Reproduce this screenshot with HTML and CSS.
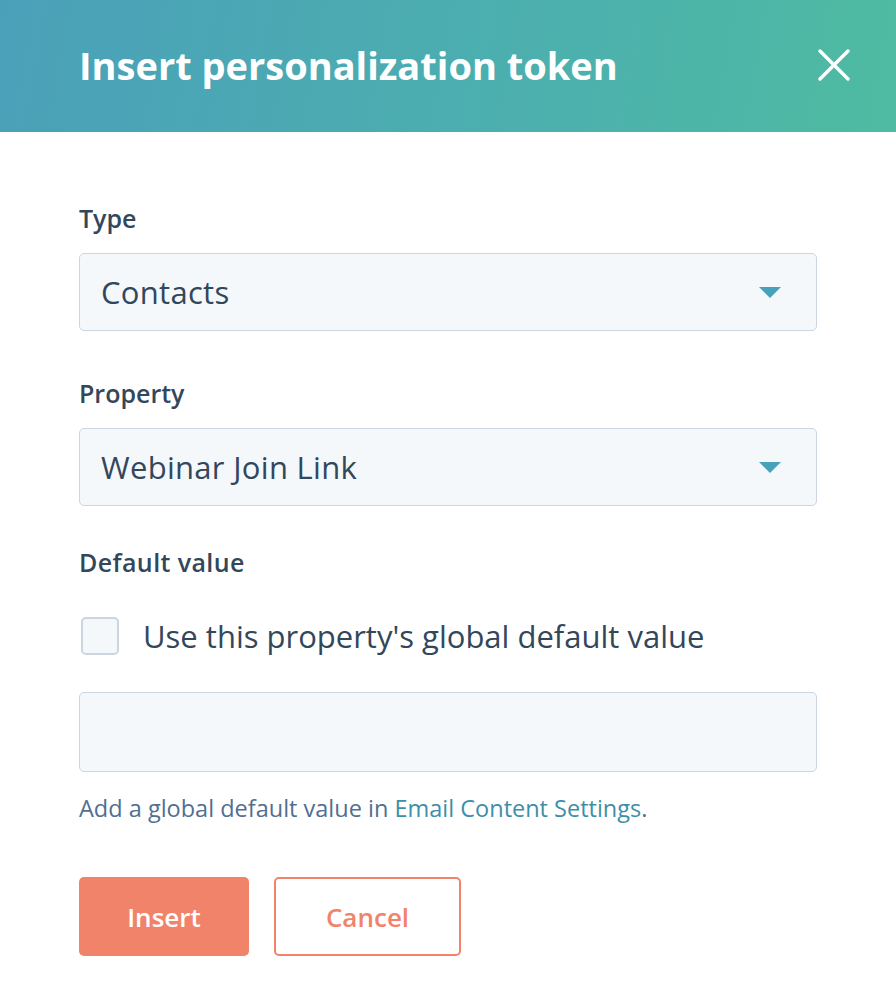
FILE: index.html
```html
<!DOCTYPE html>
<html lang="en">
<head>
<meta charset="utf-8">
<title>Insert personalization token</title>
<link rel="stylesheet" href="styles.css">
</head>
<body>
<div class="dialog">
  <header class="header">
    <h1 class="title">Insert personalization token</h1>
    <button class="close" aria-label="Close">
      <svg width="32" height="32" viewBox="0 0 32 32"><path d="M2 2 L30 30 M30 2 L2 30" stroke="#fff" stroke-width="3.4" stroke-linecap="round" fill="none"/></svg>
    </button>
  </header>
  <main class="body">
    <div class="field">
      <label class="label">Type</label>
      <div class="select"><span>Contacts</span><span class="caret"></span></div>
    </div>
    <div class="field">
      <label class="label">Property</label>
      <div class="select"><span>Webinar Join Link</span><span class="caret"></span></div>
    </div>
    <div class="field default">
      <label class="label">Default value</label>
      <div class="check-row"><span class="checkbox"></span><span class="check-label">Use this property's global default value</span></div>
      <div class="input"></div>
      <p class="help">Add a global default value in <a class="link">Email Content Settings</a>.</p>
    </div>
    <div class="actions">
      <button class="btn primary">Insert</button>
      <button class="btn secondary">Cancel</button>
    </div>
  </main>
</div>
</body>
</html>
```
FILE: styles.css
```css
* { box-sizing: border-box; }
html, body { margin: 0; padding: 0; background: #fff; }
body { font-family: "Open Sans", Lato, sans-serif; color: #33475b; width: 896px; height: 1004px; overflow: hidden; }
.header {
  height: 132px;
  background: linear-gradient(100deg, #4aa0b9 0%, #4cb0ae 60%, #4fbba1 100%);
  display: flex; align-items: center; justify-content: space-between;
  padding: 0 46px 0 79px;
}
.title { margin: 0; color: #fff; font-size: 38px; font-weight: 700; letter-spacing: 0; padding-bottom: 2px; }
.close { background: none; border: 0; padding: 0; width: 32px; height: 32px; display: flex; margin-top: -2px; }
.body { padding: 70px 79px 0 79px; }
.field { margin-bottom: 46px; }
.label { display: block; font-size: 25px; font-weight: 600; line-height: 32px; margin-bottom: 19px; color: #33475b; }
.select {
  height: 78px; background: #f5f8fa; border: 1px solid #cbd6e2; border-radius: 5px;
  display: flex; align-items: center; justify-content: space-between;
  padding: 0 35px 0 21px; font-size: 31px; letter-spacing: 0.3px; color: #33475b;
}
.caret { width: 0; height: 0; border-left: 11px solid transparent; border-right: 11px solid transparent; border-top: 11px solid #46a2bb; }
.default { margin-bottom: 0; }
.default .label { margin-bottom: 0; margin-top: -6px; letter-spacing: 0.4px; }
.check-row { display: flex; align-items: center; height: 40px; margin-top: 38px; margin-bottom: 36px; }
.checkbox { width: 38px; height: 38px; border: 2px solid #cbd6e2; border-radius: 5px; background: #f5f8fa; margin-left: 2px; margin-right: 24px; }
.check-label { font-size: 31px; color: #33475b; }
.input { height: 80px; background: #f5f8fa; border: 1px solid #cbd6e2; border-radius: 5px; }
.help { margin: 21px 0 0 0; font-size: 23.5px; color: #516f90; line-height: 30px; }
.link { color: #3d8fa8; }
.actions { display: flex; gap: 25px; margin-top: 54px; }
.btn { height: 79px; font-family: inherit; font-size: 26px; font-weight: 600; border-radius: 5px; cursor: pointer; }
.primary { width: 170px; background: #f2836b; color: #fff; border: 0; }
.secondary { width: 187px; background: #fff; color: #f2836b; border: 2px solid #f2836b; }
```
